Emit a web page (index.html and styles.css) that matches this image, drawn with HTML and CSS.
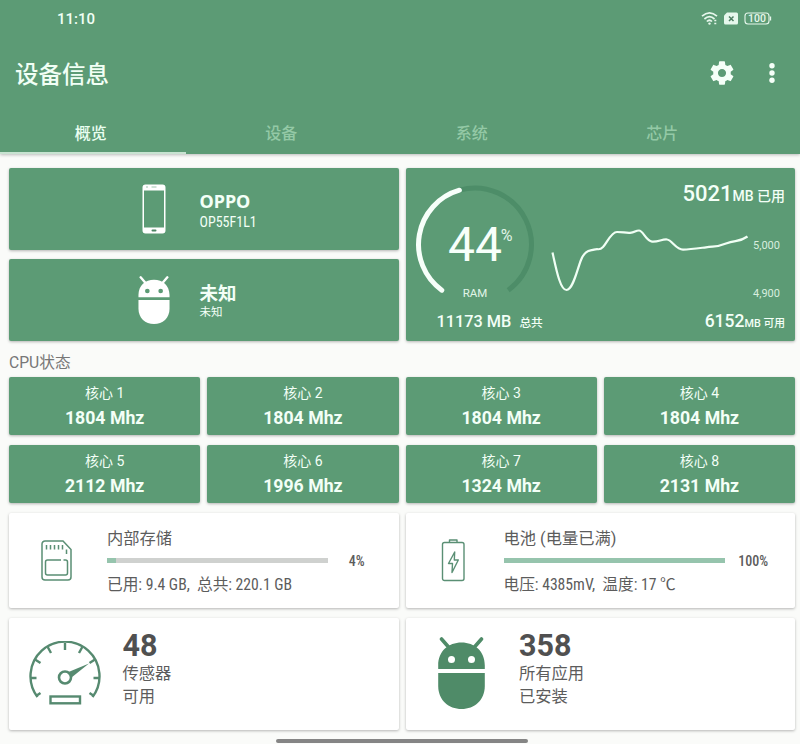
FILE: index.html
```html
<!DOCTYPE html>
<html lang="zh-CN">
<head>
    <meta charset="UTF-8">
    <meta name="viewport" content="width=device-width, initial-scale=1.0">
    <title>设备信息</title>
    <link rel="stylesheet" href="styles.css">
</head>
<body>
    <svg width="0" height="0" class="defs">
        <symbol id="android" viewBox="0 0 48 72">
            <path d="M4 2l7 8M44 2l-7 8" stroke="currentColor" stroke-width="3.6" stroke-linecap="round"/>
            <path fill="currentColor" fill-rule="evenodd" d="M.7 32V28.500C.7 14 11 5.500 24 5.500S47.300 14 47.300 28.500V32ZM14 19a3.500 3.500 0 1 0 0 7a3.500 3.500 0 1 0 0-7ZM34 19a3.500 3.500 0 1 0 0 7a3.500 3.500 0 1 0 0-7Z"/>
            <path fill="currentColor" d="M.7 36H47.300V49C47.300 63 37 72 24 72S.7 63 .7 49Z"/>
        </symbol>
    </svg>

    <header>
        <div class="status-bar">
            <span class="time">11:10</span>
            <svg class="status-icons" width="72" height="16" viewBox="0 0 72 16" fill="none" stroke="#e6f7ec">
                <path d="M2 6.200Q9.500-.6 17 6.200M4.400 9Q9.500 4.400 14.500 9M6.800 11.500Q9.500 9 12 11.500" stroke-width="1.700"/>
                <circle cx="9.500" cy="13.600" r="1.200" fill="#e6f7ec" stroke="none"/>
                <path d="M14.300 10.500h3M14.300 13.500h3" stroke-width="1.700" stroke-dasharray="2 1"/>
                <path d="M27 2.500h9.500a1.500 1.500 0 0 1 1.500 1.500v9a1.500 1.500 0 0 1-1.500 1.500h-11a1.500 1.500 0 0 1-1.500-1.500V5.500z" fill="#e6f7ec" stroke="none"/>
                <path d="M29 6.500l4.500 4.500M33.500 6.500l-4.500 4.500" stroke="#4c7d61" stroke-width="1.500"/>
                <rect x="45" y="3" width="24" height="11" rx="3" stroke-width="1.100"/>
                <path d="M70.500 6.500v4" stroke-width="1.300"/>
                <text x="57" y="12.300" class="battery-text">100</text>
            </svg>
        </div>
        <div class="toolbar">
            <h1>设备信息</h1>
            <svg class="gear" width="28" height="28" viewBox="0 0 24 24" fill="#f5fff8">
                <path d="M19.430 12.980c.04-.32.07-.64.07-.98s-.03-.66-.07-.98l2.110-1.650c.19-.15.24-.42.12-.64l-2-3.460c-.12-.22-.39-.3-.61-.22l-2.490 1c-.52-.4-1.080-.73-1.690-.98l-.38-2.650C14.460 2.180 14.250 2 14 2h-4c-.25 0-.46.18-.49.42l-.38 2.650c-.61.25-1.170.59-1.690.98l-2.490-1c-.23-.09-.49 0-.61.22l-2 3.460c-.13.22-.07.49.12.64l2.110 1.650c-.04.32-.07.65-.07.98s.03.66.07.98l-2.110 1.650c-.19.15-.24.42-.12.64l2 3.460c.12.22.39.3.61.22l2.490-1c.52.4 1.080.73 1.690.98l.38 2.650c.03.24.24.42.49.42h4c.25 0 .46-.18.49-.42l.38-2.650c.61-.25 1.170-.59 1.690-.98l2.490 1c.23.09.49 0 .61-.22l2-3.460c.12-.22.07-.49-.12-.64l-2.110-1.650zM12 15.500c-1.930 0-3.500-1.570-3.500-3.500s1.570-3.500 3.500-3.500 3.500 1.570 3.500 3.500-1.570 3.500-3.500 3.500z"/>
            </svg>
            <svg width="8" height="24" viewBox="0 0 8 24" fill="#f5fff8">
                <circle cx="4" cy="4.800" r="2.700"/>
                <circle cx="4" cy="12" r="2.700"/>
                <circle cx="4" cy="19.200" r="2.700"/>
            </svg>
        </div>
        <nav>
            <a class="tab active">概览</a>
            <a class="tab">设备</a>
            <a class="tab">系统</a>
            <a class="tab">芯片</a>
        </nav>
    </header>

    <main>
        <section class="top">
            <div class="device-cards">
                <div class="card green device">
                    <svg width="24" height="50" viewBox="0 0 24 50">
                        <path fill="#fff" fill-rule="evenodd" d="M3.500.5h17a3 3 0 0 1 3 3v43a3 3 0 0 1-3 3h-17a3 3 0 0 1-3-3v-43a3 3 0 0 1 3-3zM2 6.500v37h20v-37z"/>
                        <path d="M9.500 3h5M4 3h2" stroke="#9fc5ae"/>
                        <rect x="9.500" y="45.500" width="5" height="2" rx="1" fill="#4c8563"/>
                    </svg>
                    <div>
                        <h2>OPPO</h2>
                        <p class="model">OP55F1L1</p>
                    </div>
                </div>
                <div class="card green device">
                    <svg class="robot" width="32" height="48"><use href="#android"/></svg>
                    <div>
                        <h2 class="cn">未知</h2>
                        <p class="cn-sub">未知</p>
                    </div>
                </div>
            </div>

            <div class="card green ram">
                <div class="ram-gauge">
                    <svg width="140" height="134" viewBox="0 0 140 134" fill="none" stroke-linecap="round">
                        <path d="M53.400 22.200A56.500 56.500 0 0 1 102.200 122.200" stroke="#4d8d68" stroke-width="5" stroke-linecap="butt"/>
                        <path d="M35.800 122.200A56.500 56.500 0 0 1 53.400 22.200" stroke="#f7fffa" stroke-width="5"/>
                        <text x="69" y="93" class="ram-value">44</text>
                        <text x="100.500" y="72.500" class="ram-percent">%</text>
                        <text x="69" y="128.500" class="ram-label">RAM</text>
                    </svg>
                    <p class="total">11173 MB <small>总共</small></p>
                </div>
                <div class="ram-usage">
                    <p class="used">5021<small>MB 已用</small></p>
                    <div class="chart">
                        <svg width="202" height="80" viewBox="548 220 202 80" fill="none">
                            <path d="M552.500 252.500C556 268 560 290 566.500 290S577 270 581 260S589 251 594 249.600S599 251 603 247S611 232 617 232S625 233 630 232.800S635 230.500 639 230.500S646 241 652 241.600S662 239 667 239.500S676 249.600 683 249.600S697 248.500 706 247.300S716 247.500 726 243.500S738 243 747.500 236.500" stroke="#f1fff5" stroke-width="2.200"/>
                        </svg>
                        <div class="axis">
                            <span>5,000</span>
                            <span>4,900</span>
                        </div>
                    </div>
                    <p class="free">6152<small>MB <span>可用</span></small></p>
                </div>
            </div>
        </section>

        <h3>CPU状态</h3>
        <section class="cores">
            <div class="card green core"><p>核心 1</p><b>1804 Mhz</b></div>
            <div class="card green core"><p>核心 2</p><b>1804 Mhz</b></div>
            <div class="card green core"><p>核心 3</p><b>1804 Mhz</b></div>
            <div class="card green core"><p>核心 4</p><b>1804 Mhz</b></div>
            <div class="card green core"><p>核心 5</p><b>2112 Mhz</b></div>
            <div class="card green core"><p>核心 6</p><b>1996 Mhz</b></div>
            <div class="card green core"><p>核心 7</p><b>1324 Mhz</b></div>
            <div class="card green core"><p>核心 8</p><b>2131 Mhz</b></div>
        </section>

        <section class="info">
            <div class="card meter">
                <svg width="32" height="42" viewBox="0 0 32 42" fill="none" stroke="#5a8f74" stroke-width="1.500">
                    <path d="M4 1H22L30 9.500V37a3 3 0 0 1-3 3H4a3 3 0 0 1-3-3V4a3 3 0 0 1 3-3z"/>
                    <path d="M5.500 5v4.500M9.500 5v4.500M13.500 5v4.500M17.500 5v4.500M21.500 5v4.500M25.500 9.500v4.500"/>
                    <path d="M20 20H6.500a2 2 0 0 0-2 2V33a2 2 0 0 0 2 2H24.500a2 2 0 0 0 2-2V22a2 2 0 0 0-2-2H22.500"/>
                </svg>
                <div class="meter-body">
                    <p>内部存储</p>
                    <div class="bar"><div class="fill" style="width: 4%"></div></div>
                    <p class="detail">已用: 9.4 GB,&nbsp; 总共: 220.1 GB</p>
                </div>
                <span class="percent">4%</span>
            </div>
            <div class="card meter">
                <svg width="32" height="44" viewBox="-3.500 0 32 44" fill="none" stroke="#5a8f74" stroke-width="1.400">
                    <rect x="1" y="3.500" width="21.500" height="38" rx="2"/>
                    <path d="M8 3.500V1h7.500v2.500M13.200 13L7 24.500H11L10.500 33.500L16.800 21H12.800z" stroke-linejoin="round"/>
                </svg>
                <div class="meter-body">
                    <p>电池 (电量已满)</p>
                    <div class="bar"><div class="fill" style="width: 100%"></div></div>
                    <p class="detail">电压: 4385mV,&nbsp; 温度: 17 ℃</p>
                </div>
                <span class="percent">100%</span>
            </div>
            <div class="card count">
                <svg width="74" height="67" viewBox="0 0 74 67" fill="none" stroke="#568a70" stroke-width="2.400">
                    <path d="M9.500 56A34.500 34.500 0 1 1 64.500 56"/>
                    <path d="M37 2v7M19.700 6l3.300 6M54.300 6l-3.300 6M7 18.500l5.500 3.500M67 18.500l-5.500 3.500M2 37h6.500M72 37h-6.500M8 55l4.500-3M66 55l-4.500-3"/>
                    <circle cx="37" cy="36.500" r="6" stroke-width="2.600"/>
                    <path d="M40.500 31L61 22.500L43.500 36.500z" fill="#568a70" stroke="none"/>
                    <rect x="22.500" y="55.500" width="29.500" height="6.800"/>
                </svg>
                <div>
                    <b>48</b>
                    <p>传感器<br>可用</p>
                </div>
            </div>
            <div class="card count">
                <svg class="robot" width="74" height="74"><use href="#android" x="12.500" width="48" height="72"/></svg>
                <div>
                    <b>358</b>
                    <p>所有应用<br>已安装</p>
                </div>
            </div>
        </section>
    </main>
    <footer><div class="home-bar"></div></footer>
</body>
</html>
```
FILE: styles.css
```css
* {
    box-sizing: border-box;
}

body {
    font-family: Roboto, "Noto Sans CJK SC", sans-serif;
    margin: 0;
    height: 744px;
    overflow: hidden;
    background: #fafbf9;
    color: #5c5c5c;
    display: flex;
    flex-direction: column;
}

h1, h2, h3, p {
    margin: 0;
    font-weight: normal;
}

svg {
    display: block;
    flex: none;
}

.defs {
    position: absolute;
}

/* Шапка */
header {
    height: 154px;
    background: #5c9b75;
    color: #f1fff5;
    box-shadow: 0 1px 3px rgba(0, 0, 0, 0.25);
}

.status-bar {
    display: flex;
    justify-content: space-between;
    height: 38px;
    padding: 10px 28px 0 57px;
}

.time {
    font: 500 15px/18px Roboto, sans-serif;
}

.battery-text {
    font: 500 10.500px Roboto, sans-serif;
    text-anchor: middle;
    fill: #e6f7ec;
    stroke: none;
}

.toolbar {
    display: flex;
    align-items: center;
    height: 69px;
    padding: 0 24px 0 15px;
}

h1 {
    flex: 1;
    font-size: 23.500px;
    font-weight: 500;
}

.gear {
    margin-right: 32px;
}

nav {
    display: flex;
    height: 47px;
}

.tab {
    width: 190.500px;
    padding-right: 9px;
    line-height: 53px;
    text-align: center;
    font-size: 16px;
    font-weight: 500;
    color: #94c9a6;
}

.tab.active {
    color: #eafff1;
    background: linear-gradient(#c8e3d1, #c8e3d1) 0 100% / 186px 2px no-repeat;
}

/* Карточки */
main {
    padding: 14px 5px 0 9px;
}

.card {
    background: #fff;
    border-radius: 2px;
    box-shadow: 0 1px 3px rgba(0, 0, 0, 0.28);
}

.green {
    background: #5c9b75;
    color: #f3fff7;
}

.top {
    display: grid;
    grid-template-columns: 1fr 1fr;
    grid-template-rows: 173px;
    gap: 7px;
}

.device-cards {
    display: grid;
    grid-template-rows: 1fr 1fr;
    gap: 9px;
}

.device {
    display: grid;
    grid-template-columns: 190.500px 1fr;
    align-items: center;
}

.device svg {
    margin-left: 133px;
}

.device svg.robot {
    margin-left: 129px;
}

.robot {
    color: #4f8b68;
}

.green .robot {
    color: #fff;
}

h2 {
    font: bold 18px/22px "Noto Sans", "Noto Sans CJK SC", sans-serif;
    margin-top: 3px;
}

h2.cn {
    font-size: 18.500px;
}

.model {
    font-size: 14px;
    line-height: 20px;
    font-stretch: 86%;
}

.cn-sub {
    font-size: 11.500px;
    line-height: 17px;
}

.ram {
    display: flex;
}

.ram-gauge {
    width: 140px;
}

.ram-value {
    font-size: 48px;
    text-anchor: middle;
    fill: #f7fffa;
}

.ram-percent {
    font-size: 16px;
    text-anchor: middle;
    fill: #e1f5e8;
}

.ram-label {
    font-size: 11.500px;
    text-anchor: middle;
    fill: #e1f5e8;
}

.total {
    padding-left: 31px;
    font-size: 16.300px;
    line-height: 40px;
    font-weight: 500;
    white-space: nowrap;
}

.total small {
    font-size: 11.700px;
    margin-left: 4px;
}

.ram-usage {
    flex: 1;
    padding: 11px 10px 0 2px;
}

.used, .free {
    text-align: right;
    font-weight: 500;
}

.used {
    font-size: 22px;
    line-height: 29px;
}

.used small {
    font-size: 14px;
}

.chart {
    display: flex;
    justify-content: space-between;
    margin-top: 9px;
    height: 89px;
}

.axis {
    display: flex;
    flex-direction: column;
    justify-content: space-between;
    padding: 19px 5px 0 0;
    height: 81px;
    font-size: 11px;
    line-height: 14px;
    color: #d8eedf;
}

.free {
    font-size: 17.500px;
    line-height: 24px;
}

.free small {
    font-size: 10.800px;
}

h3 {
    font-size: 15.700px;
    line-height: 36px;
    height: 36px;
    padding-top: 4px;
    color: #777;
}

.cores {
    display: grid;
    grid-template-columns: repeat(4, 1fr);
    grid-auto-rows: 58px;
    gap: 10px 7px;
}

.core {
    text-align: center;
    padding-top: 6px;
}

.core p {
    font-size: 14px;
    line-height: 21px;
}

.core b {
    display: block;
    font-size: 17.700px;
    line-height: 28px;
}

/* Память, батарея, датчики, приложения */
.info {
    display: grid;
    grid-template-columns: 1fr 1fr;
    grid-template-rows: 95px 112px;
    gap: 10px 7px;
    margin-top: 10px;
}

.meter {
    display: flex;
    align-items: center;
    padding-left: 32px;
}

.meter-body {
    width: 221px;
    margin: 2px 0 0 34px;
}

.meter-body p {
    font-size: 16.300px;
    line-height: 24px;
    white-space: nowrap;
}

.meter-body .detail {
    font-size: 15.700px;
    font-stretch: 86%;
}

.bar {
    height: 5px;
    margin: 7px 0 10px;
    background: #cfd1cf;
}

.fill {
    height: 100%;
    background: #96c4ad;
}

.percent {
    flex: 1;
    padding: 1px 13px 0 0;
    text-align: center;
    font-size: 14px;
    font-stretch: 75%;
    font-weight: 500;
}

.count {
    display: flex;
    align-items: center;
    padding-left: 19px;
}

.count > div {
    margin: -12px 0 0 20.500px;
}

.count b {
    display: block;
    font-size: 30.500px;
    line-height: 35px;
    color: #505050;
}

.count p {
    font-size: 16.300px;
    line-height: 22.500px;
}

footer {
    padding-top: 9px;
}

.home-bar {
    width: 252px;
    height: 3.500px;
    margin-left: 276px;
    border-radius: 2px;
    background: #858585;
}
```
